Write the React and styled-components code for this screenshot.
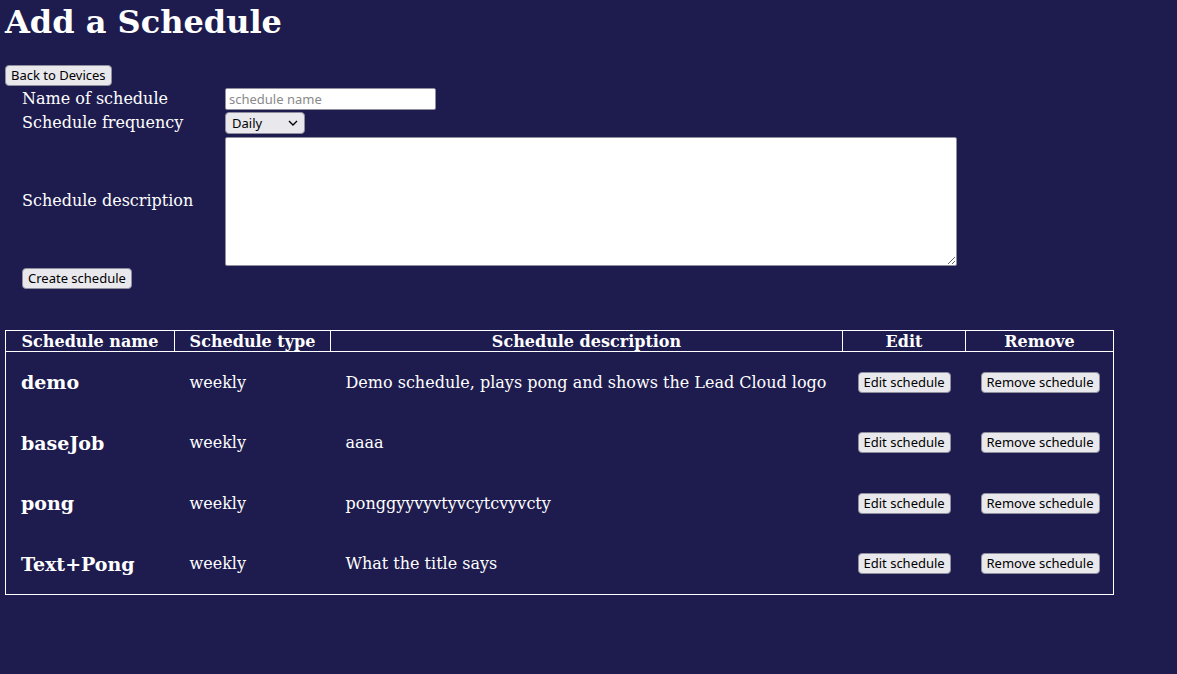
import React, { useState } from 'react';
import styled, { createGlobalStyle } from 'styled-components';

const schedules = [
  { name: 'demo', type: 'weekly', description: 'Demo schedule, plays pong and shows the Lead Cloud logo' },
  { name: 'baseJob', type: 'weekly', description: 'aaaa' },
  { name: 'pong', type: 'weekly', description: 'ponggyyvyvtyvcytcvyvcty' },
  { name: 'Text+Pong', type: 'weekly', description: 'What the title says' },
];

const App = () => {
  const [name, setName] = useState('');
  const [frequency, setFrequency] = useState('daily');
  const [description, setDescription] = useState('');

  return (
    <Page>
      <GlobalStyle />
      <Title>Add a Schedule</Title>
      <Button>Back to Devices</Button>

      <Form onSubmit={(e) => e.preventDefault()}>
        <Label>Name of schedule</Label>
        <TextInput
          placeholder="schedule name"
          value={name}
          onChange={(e) => setName(e.target.value)}
        />

        <Label>Schedule frequency</Label>
        <SelectWrap>
          <Select value={frequency} onChange={(e) => setFrequency(e.target.value)}>
            <option value="daily">Daily</option>
            <option value="weekly">Weekly</option>
            <option value="monthly">Monthly</option>
          </Select>
          <Chevron width="10" height="6" viewBox="0 0 10 6">
            <path d="M1 1l4 4 4-4" fill="none" stroke="#000" strokeWidth="1.4" />
          </Chevron>
        </SelectWrap>

        <Label>Schedule description</Label>
        <TextArea value={description} onChange={(e) => setDescription(e.target.value)} />

        <SubmitRow>
          <Button type="submit">Create schedule</Button>
        </SubmitRow>
      </Form>

      <Table>
        <colgroup>
          <col style={{ width: 169 }} />
          <col style={{ width: 156 }} />
          <col style={{ width: 512 }} />
          <col style={{ width: 123 }} />
          <col style={{ width: 148 }} />
        </colgroup>
        <thead>
          <tr>
            <Th>Schedule name</Th>
            <Th>Schedule type</Th>
            <Th>Schedule description</Th>
            <Th>Edit</Th>
            <Th>Remove</Th>
          </tr>
        </thead>
        <tbody>
          {schedules.map((s) => (
            <tr key={s.name}>
              <NameCell>{s.name}</NameCell>
              <Td>{s.type}</Td>
              <Td>{s.description}</Td>
              <Td $center><Button>Edit schedule</Button></Td>
              <Td $center><Button>Remove schedule</Button></Td>
            </tr>
          ))}
        </tbody>
      </Table>
    </Page>
  );
};

export default App;

// --- styles ---

const GlobalStyle = createGlobalStyle`
  html, body { margin: 0; background: #1e1c4e; }
  body { font-family: "DejaVu Serif", serif; color: #fff; }
`;

const Page = styled.div`
  min-height: 674px;
  padding: 4px 5px;
  box-sizing: border-box;
`;

const Title = styled.h1`
  font-size: 32px; font-weight: 700; margin: 0 0 24px; line-height: 37px;
`;

const Button = styled.button`
  font-family: "Noto Sans", sans-serif; font-size: 13px; color: #000;
  background: #e9e9ed; border: 1px solid #8f8f9d; border-radius: 4px;
  height: 21px; padding: 0 5px; line-height: 17px; cursor: pointer;
  &:hover { background: #d0d0d7; }
`;

const Form = styled.form`
  display: grid; grid-template-columns: 203px auto;
  align-items: center; row-gap: 2px;
  margin: 2px 0 0 17px;
`;

const Label = styled.label` font-size: 16px; line-height: 19px; margin-top: -2px; `;

const TextInput = styled.input`
  width: 211px; height: 22px; box-sizing: border-box;
  border: 1px solid #8f8f9d; border-radius: 2px; padding: 0 3px;
  font-family: "Noto Sans", sans-serif; font-size: 13px;
  justify-self: start;
  &::placeholder { color: #8a8a8a; }
`;

const SelectWrap = styled.div` position: relative; width: 80px; height: 22px; justify-self: start; `;

const Select = styled.select`
  appearance: none; width: 80px; height: 22px; box-sizing: border-box;
  background: #e9e9ed; border: 1px solid #8f8f9d; border-radius: 4px;
  padding: 0 6px; font-family: "Noto Sans", sans-serif; font-size: 13px; color: #000;
`;

const Chevron = styled.svg`
  position: absolute; right: 7px; top: 8px; pointer-events: none;
`;

const TextArea = styled.textarea`
  display: block; width: 732px; height: 129px; box-sizing: border-box; resize: both;
  border: 1px solid #8f8f9d; border-radius: 2px; justify-self: start; margin-top: 1px;
`;

const SubmitRow = styled.div` grid-column: 1 / -1; `;

const Table = styled.table`
  margin-top: 41px; width: 1108px; table-layout: fixed;
  border-collapse: collapse; border: 1px solid #fff;
`;

const Th = styled.th`
  border: 1px solid #fff; padding: 0; height: 20px; white-space: nowrap;
  font-size: 16px; font-weight: 700; line-height: 19px; text-align: center;
`;

const Td = styled.td`
  padding: 0 15px; height: 60.5px; font-size: 16px; white-space: nowrap;
  text-align: ${(p) => (p.$center ? 'center' : 'left')};
`;

const NameCell = styled(Td)` font-size: 19px; font-weight: 700; `;
